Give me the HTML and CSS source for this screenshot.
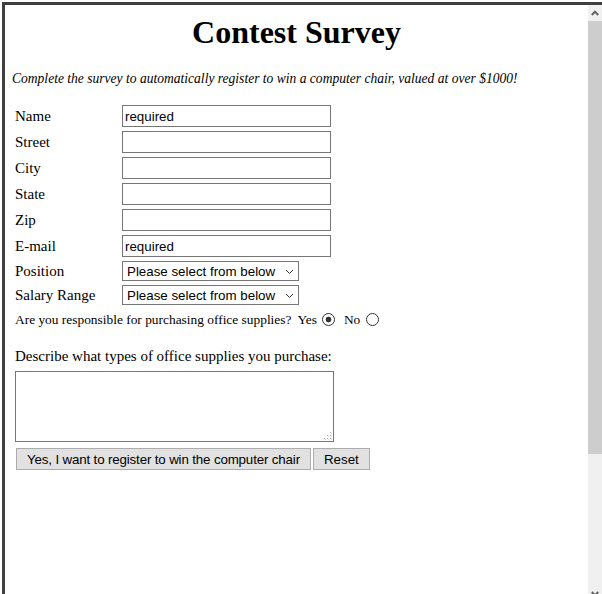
FILE: index.html
```html
<!DOCTYPE html>
<html>
<head>
<meta charset="utf-8">
<title>Contest Survey</title>
<link rel="stylesheet" href="styles.css">
</head>
<body>
<div class="frame">
  <main class="page">
    <h1 class="title">Contest Survey</h1>
    <p class="intro">Complete the survey to automatically register to win a computer chair, valued at over $1000!</p>
    <form class="survey">
      <div class="fields">
        <label class="lbl" for="f-name">Name</label><input class="txt" id="f-name" type="text" value="required">
        <label class="lbl" for="f-street">Street</label><input class="txt" id="f-street" type="text">
        <label class="lbl" for="f-city">City</label><input class="txt" id="f-city" type="text">
        <label class="lbl" for="f-state">State</label><input class="txt" id="f-state" type="text">
        <label class="lbl" for="f-zip">Zip</label><input class="txt" id="f-zip" type="text">
        <label class="lbl" for="f-email">E-mail</label><input class="txt" id="f-email" type="text" value="required">
        <label class="lbl" for="f-pos">Position</label>
        <span class="selwrap"><select class="sel" id="f-pos"><option>Please select from below</option></select><svg class="chev" width="9" height="6" viewBox="0 0 9 6"><polyline points="1,1 4.5,4.5 8,1" fill="none" stroke="#333" stroke-width="1"/></svg></span>
        <label class="lbl" for="f-sal">Salary Range</label>
        <span class="selwrap"><select class="sel" id="f-sal"><option>Please select from below</option></select><svg class="chev" width="9" height="6" viewBox="0 0 9 6"><polyline points="1,1 4.5,4.5 8,1" fill="none" stroke="#333" stroke-width="1"/></svg></span>
      </div>
      <div class="radios">
        <span class="q">Are you responsible for purchasing office supplies?</span>
        <span class="opt">Yes</span><input class="rad" type="radio" name="resp" checked>
        <span class="opt opt-no">No</span><input class="rad" type="radio" name="resp">
      </div>
      <p class="describe">Describe what types of office supplies you purchase:</p>
      <div class="boxwrap">
        <textarea class="box"></textarea>
        <svg class="grip" width="9" height="9" viewBox="0 0 9 9"><g fill="#a0a0a0"><rect x="7" y="1" width="1" height="1"/><rect x="4" y="4" width="1" height="1"/><rect x="7" y="4" width="1" height="1"/><rect x="1" y="7" width="1" height="1"/><rect x="4" y="7" width="1" height="1"/><rect x="7" y="7" width="1" height="1"/></g><g fill="#d8d8d8"><rect x="8" y="2" width="1" height="1"/><rect x="5" y="5" width="1" height="1"/><rect x="8" y="5" width="1" height="1"/><rect x="2" y="8" width="1" height="1"/><rect x="5" y="8" width="1" height="1"/><rect x="8" y="8" width="1" height="1"/></g></svg>
      </div>
      <div class="buttons">
        <button class="btn btn-main" type="submit">Yes, I want to register to win the computer chair</button>
        <button class="btn" type="reset">Reset</button>
      </div>
    </form>
  </main>
  <div class="scrollbar">
    <div class="sb-btn"><svg width="14" height="16" viewBox="0 0 14 16"><polyline points="3.8,10 7,6.6 10.2,10" fill="none" stroke="#606060" stroke-width="2"/></svg></div>
    <div class="sb-thumb"></div>
    <div class="sb-track"></div>
    <div class="sb-btn"><svg width="14" height="16" viewBox="0 0 14 16"><polyline points="3.8,6 7,9.4 10.2,6" fill="none" stroke="#606060" stroke-width="2"/></svg></div>
  </div>
</div>
</body>
</html>
```
FILE: styles.css
```css
html, body {
  margin: 0;
  height: 594px;
  overflow: hidden;
  background: #fff;
}
body {
  font-family: "Liberation Serif", "Times New Roman", serif;
  color: #000;
}
.frame {
  margin: 2px 0 0 2px;
  height: 592px;
  box-sizing: border-box;
  border-top: 3px solid #3f3f3f;
  border-left: 3px solid #3f3f3f;
  display: flex;
  overflow: hidden;
}
.page {
  flex: 1;
  min-width: 0;
}
.title {
  margin: 9px 0 0;
  font-size: 32px;
  line-height: 37px;
  font-weight: bold;
  text-align: center;
}
.intro {
  margin: 20px 0 0 7px;
  font-size: 13.55px;
  line-height: 15px;
  font-style: italic;
}
.survey {
  margin: 19px 0 0 10px;
}
.fields {
  display: grid;
  grid-template-columns: 107px auto;
  row-gap: 4px;
  align-items: center;
  justify-items: start;
}
.lbl {
  font-size: 15px;
  line-height: 18px;
}
.txt {
  width: 209px;
  height: 22px;
  box-sizing: border-box;
  margin: 0;
  padding: 0 2px;
  border: 1px solid #767676;
  border-radius: 0;
  font-family: "Liberation Sans", Arial, sans-serif;
  font-size: 13.33px;
  color: #000;
  background: #fff;
  outline: none;
}
.selwrap {
  position: relative;
  display: block;
  width: 177px;
  height: 20px;
}
.sel {
  appearance: none;
  -webkit-appearance: none;
  display: block;
  width: 177px;
  height: 20px;
  box-sizing: border-box;
  margin: 0;
  padding: 0 0 0 4px;
  border: 1px solid #767676;
  border-radius: 0;
  background: #fff;
  font-family: "Liberation Sans", Arial, sans-serif;
  font-size: 13.33px;
  color: #000;
  outline: none;
}
.chev {
  position: absolute;
  left: 163px;
  top: 8px;
  pointer-events: none;
}
.radios {
  display: flex;
  align-items: center;
  height: 15px;
  margin-top: 7px;
  font-size: 13.4px;
  line-height: 15px;
}
.opt {
  margin-left: 6px;
}
.opt-no {
  margin-left: 9px;
}
.rad {
  appearance: none;
  -webkit-appearance: none;
  width: 13px;
  height: 13px;
  box-sizing: border-box;
  margin: 0 0 0 5px;
  border: 1px solid #333;
  border-radius: 50%;
  background: #fff;
}
.opt-no + .rad {
  margin-left: 6px;
}
.rad:checked {
  background: radial-gradient(circle, #333 0 2.6px, #fff 3.2px);
}
.describe {
  margin: 20px 0 0;
  font-size: 15px;
  line-height: 18px;
}
.boxwrap {
  position: relative;
  width: 319px;
  margin: 6px 0 0;
}
.box {
  display: block;
  width: 319px;
  height: 71px;
  box-sizing: border-box;
  margin: 0;
  border: 1px solid #767676;
  border-radius: 0;
  outline: none;
  resize: none;
}
.grip {
  position: absolute;
  right: 2px;
  bottom: 2px;
  pointer-events: none;
}
.buttons {
  display: flex;
  gap: 2px;
  margin: 6px 0 0 1px;
}
.btn {
  height: 22px;
  box-sizing: border-box;
  margin: 0;
  padding: 0 10px;
  border: 1px solid #adadad;
  border-radius: 0;
  background: #e1e1e1;
  font-family: "Liberation Sans", Arial, sans-serif;
  font-size: 13.33px;
  color: #000;
}
.btn-main {
  letter-spacing: -0.15px;
}
.scrollbar {
  width: 14px;
  flex: 0 0 14px;
  display: flex;
  flex-direction: column;
  background: #f0f0f0;
}
.sb-btn {
  flex: 0 0 16px;
  height: 16px;
  background: #f0f0f0;
}
.sb-btn svg {
  display: block;
}
.sb-thumb {
  flex: 0 0 433px;
  background: #cdcdcd;
}
.sb-track {
  flex: 0 0 132px;
  background: #f0f0f0;
}
```
